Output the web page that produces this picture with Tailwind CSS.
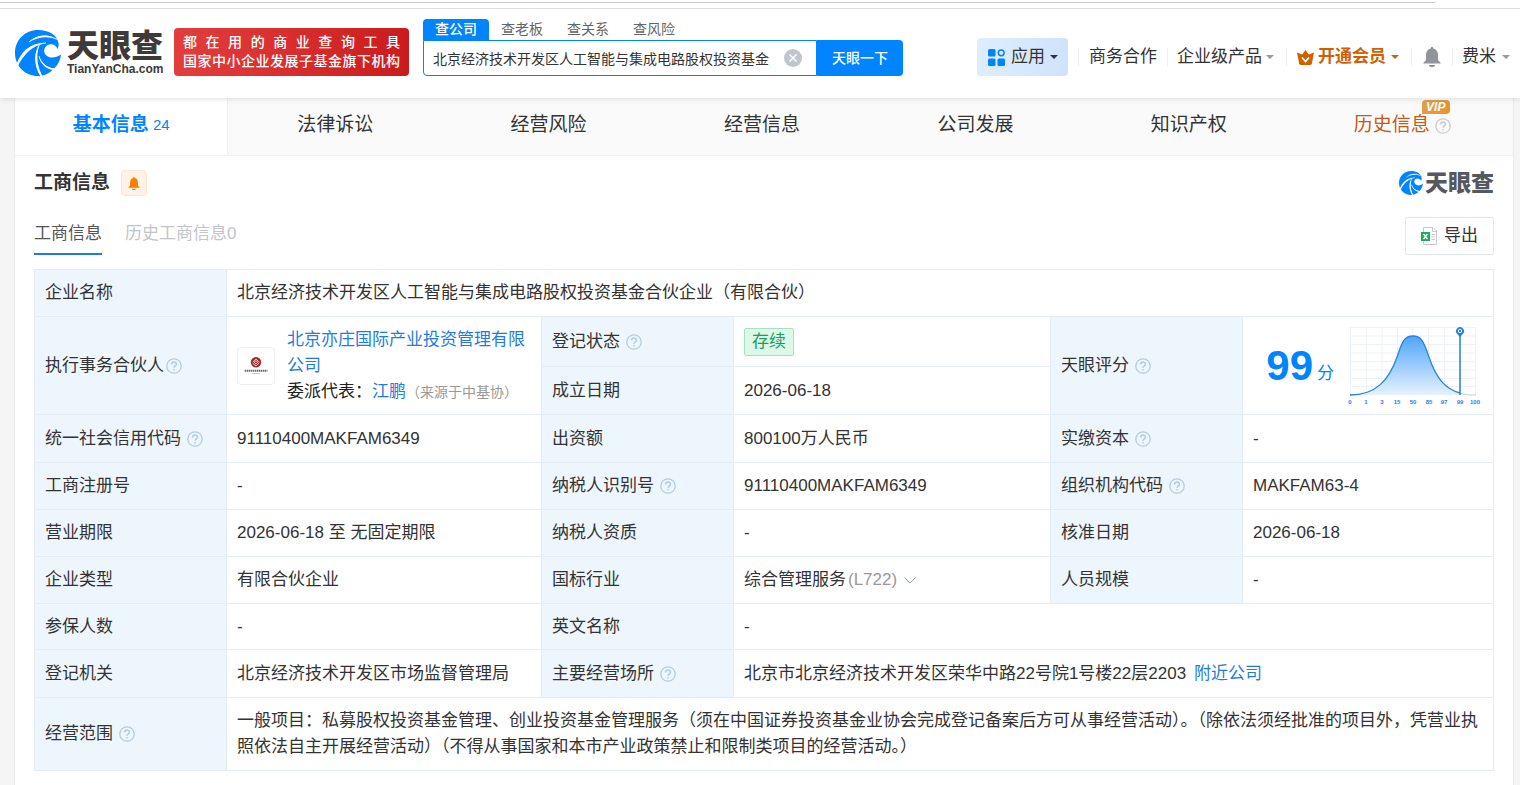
<!DOCTYPE html>
<html lang="zh-CN">

<head>
    <meta charset="UTF-8">
    <meta name="viewport" content="width=device-width, initial-scale=1.0">
    <title>天眼查 - 工商信息</title>
    <script src="https://cdn.jsdelivr.net/npm/@tailwindcss/browser@4"></script>
    <style>
        body {
            font-family: "Liberation Sans", "Noto Sans CJK SC", sans-serif;
        }

        .info th {
            background: #eef6fd;
            font-weight: 400;
            text-align: left;
        }

        .info th,
        .info td {
            border: 1px solid #e3edf4;
            padding: 0 10px;
        }
    </style>
</head>

<body class="bg-[#f5f5f5] text-[#333] text-[17px] leading-[26px] min-h-screen flex flex-col">
    <!-- 图标 -->
    <svg class="hidden">
        <symbol id="logo" viewBox="0 0 46 46">
            <path fill="#0084ff"
                d="M23 0C34 0 42 5 43.500 13C43.900 15 43.500 17 42.500 19C41 14.500 36 13 32 15.500C28 18.500 28.500 23.500 32 26C36 28.500 41 28 46 24.500C45 32 42 36 38 39.500C34 43.500 29 46 23 46C10 46 0 36 0 23C0 10 10 0 23 0Z" />
            <path fill="#fff"
                d="M14 12C22 4.500 33 3.500 42 9.500C33 6 24 6.500 14 12ZM1.500 35C5 23 14 12.500 31 13C18 15.500 9 23 2.500 37ZM24.500 14.500C18.500 23 18.500 35 25.500 46.500H27.500C21.500 35 21 24 24.500 14.500ZM24 26C25 33 31 39.500 38.500 40L39.500 38.500C32 37.500 26.500 33 24 26Z" />
            <path fill="none" stroke="#fff" stroke-width=".800"
                d="M14 12C22 5 33 4 42 9.500M2 36C7 23 15 14 31 13M24.500 14.500C19.500 24 20 35 26.500 46M24 26C26 34 32 39 39 39" />
        </symbol>
        <symbol id="help" viewBox="0 0 16 16">
            <circle cx="8" cy="8" r="7.200" fill="none" stroke="currentColor" stroke-width="1.300" />
            <path d="M5.600 6.400C5.600 3.200 10.500 3.300 10.500 6.200C10.500 7.900 8 8 8 9.800M8 11V12.500" fill="none"
                stroke="currentColor" stroke-width="1.500" />
        </symbol>
        <symbol id="bell" viewBox="0 0 18 20">
            <path
                d="M9 0C9.900 0 10.400 .6 10.400 1.500C13.400 2.200 15 4.700 15 8V13.500L17.500 15.500V16.500H.5V15.500L3 13.500V8C3 4.700 4.600 2.200 7.600 1.500C7.600 .6 8.100 0 9 0ZM6 18H12V19L10.500 20H7.500L6 19Z"
                fill="currentColor" />
        </symbol>
        <symbol id="caret" viewBox="0 0 8 4">
            <path d="M0 0H8L4 4Z" fill="currentColor" />
        </symbol>
    </svg>

    <header class="bg-white shadow-[0_1px_6px_rgba(0,0,0,0.12)] relative z-10">
        <div class="h-[9px] border-b border-[#dedede]">
            <div class="h-[3px] mr-[84px] border-b border-[#c8c8c8] rounded-br-lg"></div>
        </div>
        <div class="h-[89px] pb-[22px] pl-[15px] pr-[10px] flex items-end">
            <a href="#" class="flex items-center gap-[6px] shrink-0 text-[#3e3a39]">
                <svg class="size-[46px]">
                    <use href="#logo" />
                </svg>
                <span class="block w-[97px]">
                    <span class="block text-[32px] leading-[32px] font-black">天眼查</span>
                    <span class="block text-[12px] leading-[14px] font-bold">TianYanCha.com</span>
                </span>
            </a>
            <div
                class="ml-[10px] w-[235px] h-12 shrink-0 px-[9px] pt-[5px] rounded-sm bg-linear-to-r from-[#e43d3d] to-[#cb1a1c] text-white text-[14px] leading-[19px] font-medium whitespace-nowrap">
                <p class="[text-align-last:justify]">都 在 用 的 商 业 查 询 工 具</p>
                <p class="[text-align-last:justify]">国家中小企业发展子基金旗下机构</p>
            </div>

            <form class="ml-[14px] w-[480px] shrink-0">
                <div class="flex text-[14px] leading-[21px] text-[#666]">
                    <button type="button" class="w-[66px] bg-[#0084ff] text-white font-medium rounded-t-sm">查公司</button>
                    <button type="button" class="w-[66px]">查老板</button>
                    <button type="button" class="w-[66px]">查关系</button>
                    <button type="button" class="w-[66px]">查风险</button>
                </div>
                <div class="flex h-9">
                    <div class="flex flex-1 items-center border border-[#0084ff] rounded-bl-sm pl-[9px] pr-[14px]">
                        <input type="text" aria-label="查公司" value="北京经济技术开发区人工智能与集成电路股权投资基金合伙企业（有限合伙）"
                            class="flex-1 min-w-0 h-full text-[14px] outline-none">
                        <button type="button" aria-label="清空" class="ml-[14px]">
                            <svg class="size-[18px]" viewBox="0 0 18 18">
                                <circle cx="9" cy="9" r="9" fill="#c0c4cc" />
                                <path d="M5.500 5.500L12.500 12.500M12.500 5.500L5.500 12.500" stroke="#fff" stroke-width="1.500" />
                            </svg>
                        </button>
                    </div>
                    <button type="submit"
                        class="w-[86px] bg-[#0084ff] text-white text-[14px] font-medium rounded-r-sm">天眼一下</button>
                </div>
            </form>

            <nav class="ml-auto flex items-center h-[38px] whitespace-nowrap">
                <button
                    class="flex items-center w-[91px] h-[38px] pl-[11px] rounded-sm bg-linear-to-r from-[#deeeff] to-[#cfe3fb]">
                    <svg class="size-[17px] mr-[6px]" viewBox="0 0 17 17" fill="#0084ff">
                        <rect width="7.500" height="7.500" rx="1.500" />
                        <rect y="9.500" width="7.500" height="7.500" rx="1.500" />
                        <rect x="9.500" y="9.500" width="7.500" height="7.500" rx="1.500" />
                        <circle cx="13.200" cy="3.800" r="2.900" fill="none" stroke="#0084ff" stroke-width="1.500" />
                    </svg>
                    应用
                    <svg class="w-2 h-1 ml-[5px]">
                        <use href="#caret" />
                    </svg>
                </button>
                <a href="#" class="ml-[10px] px-[10px] border-l border-[#eee] leading-[18px]">商务合作</a>
                <a href="#" class="flex items-center pl-[9px] pr-3 border-l border-[#eee] leading-[18px]">企业级产品
                    <svg class="w-2 h-1 ml-1 text-[#999]">
                        <use href="#caret" />
                    </svg>
                </a>
                <a href="#"
                    class="flex items-center pl-[10px] pr-3 border-l border-[#eee] leading-[18px] font-bold text-[#d06000]">
                    <svg class="w-[17px] h-[15px] mr-1" viewBox="0 0 17 15">
                        <path
                            d="M8.500 0L11.800 4.500L17 2.500L15 13C14.800 14.300 14.300 15 13 15H4C2.700 15 2.200 14.300 2 13L0 2.500L5.200 4.500Z"
                            fill="currentColor" />
                        <path d="M5 7.500L8.500 11.500L12 7.500" fill="none" stroke="#fff" stroke-width="1.800" />
                    </svg>
                    开通会员
                    <svg class="w-2 h-1 ml-[5px]">
                        <use href="#caret" />
                    </svg>
                </a>
                <a href="#" aria-label="消息" class="px-[11px] border-l border-[#eee] h-[18px] flex items-center">
                    <svg class="w-[18px] h-5 text-[#909499]">
                        <use href="#bell" />
                    </svg>
                </a>
                <a href="#" class="flex items-center pl-[9px] border-l border-[#eee] leading-[18px]">费米
                    <svg class="w-2 h-1 ml-[6px] text-[#999]">
                        <use href="#caret" />
                    </svg>
                </a>
            </nav>
        </div>
    </header>

    <main class="ml-[14px] mr-[6px] flex-1 bg-white border-x border-[#ebebeb]">
        <nav class="grid grid-cols-7 h-[58px] pr-1 bg-[#fafafa] border-b border-[#f0f0f0] text-[19px]">
            <a href="#"
                class="flex items-center justify-center pb-1 bg-white border-r border-[#f0f0f0] text-[#0084ff] font-bold">基本信息<span
                    class="ml-1 text-[15px] font-normal">24</span></a>
            <a href="#" class="flex items-center justify-center pb-1">法律诉讼</a>
            <a href="#" class="flex items-center justify-center pb-1">经营风险</a>
            <a href="#" class="flex items-center justify-center pb-1">经营信息</a>
            <a href="#" class="flex items-center justify-center pb-1">公司发展</a>
            <a href="#" class="flex items-center justify-center pb-1">知识产权</a>
            <a href="#" class="flex items-center justify-center pb-1 text-[#c55a11]">
                <span class="relative">历史信息
                    <span
                        class="absolute -top-3 -right-5 w-7 h-[14px] rounded-sm rounded-bl-none bg-linear-to-r from-[#e0a04a] to-[#e5952f] text-white text-[12px] leading-[14px] font-black italic text-center">VIP</span>
                </span>
                <svg class="size-4 ml-[5px] mt-[2px] text-[#ccc]">
                    <use href="#help" />
                </svg>
            </a>
        </nav>

        <section class="px-[19px] pt-[14px] pb-[14px]">
            <div class="flex items-center h-[26px]">
                <h2 class="text-[19px] font-bold">工商信息</h2>
                <button aria-label="订阅"
                    class="ml-[11px] size-[26px] flex items-center justify-center rounded-sm border border-[#ffe3cc] bg-[#fff3e8] text-[#ff7d00]">
                    <svg class="w-3 h-[13px]">
                        <use href="#bell" />
                    </svg>
                </button>
                <div class="ml-auto flex items-center gap-[2px] text-[#55585e]">
                    <svg class="size-6">
                        <use href="#logo" />
                    </svg>
                    <span class="text-[23px] leading-[26px] font-black">天眼查</span>
                </div>
            </div>

            <div class="mt-[21px] flex items-start">
                <a href="#" class="h-[38px] pt-1 border-b-2 border-[#1f7ed0] text-[#555]">工商信息</a>
                <a href="#" class="ml-[23px] pt-1 text-[#c4c4c8]">历史工商信息0</a>
                <button
                    class="ml-auto w-[89px] h-[38px] flex items-center justify-center gap-[6px] border border-[#e0e6ea] rounded-xs">
                    <svg class="w-[17px] h-[18px]" viewBox="0 0 17 18">
                        <path d="M2.500 .5H12L15.500 4V17.500H2.500ZM11.500 .5V4.500H15.500" fill="#fff" stroke="#c5c8ce" />
                        <path d="M10.500 7.500H14M10.500 10H14M10.500 12.500H14" stroke="#c5c8ce" />
                        <rect y="5" width="9" height="9" fill="#21a566" />
                        <path d="M2.500 7L6.500 12M6.500 7L2.500 12" stroke="#fff" stroke-width="1.300" />
                    </svg>
                    导出
                </button>
            </div>

            <table class="info mt-[14px] w-full table-fixed border-collapse">
                <colgroup>
                    <col class="w-[192px]">
                    <col class="w-[315px]">
                    <col class="w-[192px]">
                    <col class="w-[317px]">
                    <col class="w-[192px]">
                    <col>
                </colgroup>
                <tr class="h-[47px]">
                    <th>企业名称</th>
                    <td colspan="5">北京经济技术开发区人工智能与集成电路股权投资基金合伙企业（有限合伙）</td>
                </tr>
                <tr class="h-[50px]">
                    <th rowspan="2">
                        <div class="flex items-center">执行事务合伙人<svg class="size-4 ml-[2px] text-[#b3cbe2]">
                                <use href="#help" />
                            </svg></div>
                    </th>
                    <td rowspan="2">
                        <div class="flex items-center">
                            <svg class="size-[38px] shrink-0 mr-3 border border-[#eee] rounded-sm" viewBox="0 0 38 38">
                                <circle cx="19" cy="15" r="5.500" fill="#a3272d" />
                                <path d="M15.500 15L19 11.500L22.500 15M15.500 16L19 19L22.500 15.500M17 15L19 13.500L21 15L19 17Z"
                                    fill="none" stroke="#fff" stroke-width=".8" />
                                <path d="M7 24H31" stroke="#666" stroke-width="2" stroke-dasharray="1.500 .6" />
                                <path d="M15 27H23" stroke="#aaa" stroke-dasharray="1.500 .6" />
                            </svg>
                            <div>
                                <a href="#" class="text-[#1f7ce0]">北京亦庄国际产业投资管理有限公司</a>
                                <p class="text-[#222] whitespace-nowrap">委派代表：<a href="#"
                                        class="text-[#1f7ce0]">江鹏</a><span
                                        class="text-[14px] text-[#999]">（来源于中基协）</span></p>
                            </div>
                        </div>
                    </td>
                    <th>
                        <div class="flex items-center">登记状态<svg class="size-4 ml-[6px] text-[#b3cbe2]">
                                <use href="#help" />
                            </svg></div>
                    </th>
                    <td><span
                            class="inline-block px-[7px] border border-[#a5e3c0] bg-[#ddf8e8] text-[#16a05c] rounded-xs">存续</span>
                    </td>
                    <th rowspan="2">
                        <div class="flex items-center">天眼评分<svg class="size-4 ml-[6px] text-[#b3cbe2]">
                                <use href="#help" />
                            </svg></div>
                    </th>
                    <td rowspan="2">
                        <div class="flex items-center justify-end">
                            <span class="text-[42px] leading-[42px] font-bold text-[#0084ff]">99</span>
                            <span class="ml-1 mt-4 text-[#0084ff]">分</span>
                            <!-- 评分分布曲线 -->
                            <svg class="ml-3 w-[137px] h-20" viewBox="0 0 137 80">
                                <defs>
                                    <linearGradient id="score" x1="0" y1="0" x2="0" y2="1">
                                        <stop offset="0" stop-color="#4ea5fb" />
                                        <stop offset="1" stop-color="#e6f2fe" />
                                    </linearGradient>
                                </defs>
                                <path fill="none" stroke="#edf2f8"
                                    d="M4.500 1.500H130M4.500 10H130M4.500 18.500H130M4.500 27H130M4.500 35.500H130M4.500 44H130M4.500 52.500H130M4.500 60.500H130M4.500 1V69M20.500 1V69M36 1V69M51.500 1V69M67 1V69M82.500 1V69M98.500 1V69M114 1V69M129.500 1V69" />
                                <path fill="url(#score)"
                                    d="M4 69C30 69 43 54 51 31C56 16 58 10 67 10C76 10 78 17 83 31C90 52 99 63 114 67V69Z" />
                                <path fill="none" stroke="#2a82dc" stroke-width="1.300"
                                    d="M4 69C30 69 43 54 51 31C56 16 58 10 67 10C76 10 78 17 83 31C90 52 99 63 114 67" />
                                <path fill="none" stroke="#c3cdd8" d="M114 67C119 69 124 69 130 69" />
                                <path stroke="#1f7fe0" stroke-width="1.500" d="M114 8V69" />
                                <path fill="#1f7fe0" d="M114 11L110.800 7.500A4 4 0 1 1 117.200 7.500Z" />
                                <circle cx="114" cy="5" r="1.700" fill="#1f7fe0" stroke="#fff" />
                                <g fill="#2a82dc" font-size="6" font-weight="700" text-anchor="middle">
                                    <text x="4" y="78">0</text>
                                    <text x="20" y="78">1</text>
                                    <text x="36" y="78">3</text>
                                    <text x="51" y="78">15</text>
                                    <text x="67" y="78">50</text>
                                    <text x="83" y="78">85</text>
                                    <text x="98" y="78">97</text>
                                    <text x="114" y="78">99</text>
                                    <text x="129" y="78">100</text>
                                </g>
                            </svg>
                        </div>
                    </td>
                </tr>
                <tr class="h-[48px]">
                    <th>成立日期</th>
                    <td>2026-06-18</td>
                </tr>
                <tr class="h-[48px]">
                    <th>
                        <div class="flex items-center">统一社会信用代码<svg class="size-4 ml-[6px] text-[#b3cbe2]">
                                <use href="#help" />
                            </svg></div>
                    </th>
                    <td>91110400MAKFAM6349</td>
                    <th>出资额</th>
                    <td>800100万人民币</td>
                    <th>
                        <div class="flex items-center">实缴资本<svg class="size-4 ml-[6px] text-[#b3cbe2]">
                                <use href="#help" />
                            </svg></div>
                    </th>
                    <td>-</td>
                </tr>
                <tr class="h-[47px]">
                    <th>工商注册号</th>
                    <td>-</td>
                    <th>
                        <div class="flex items-center">纳税人识别号<svg class="size-4 ml-[6px] text-[#b3cbe2]">
                                <use href="#help" />
                            </svg></div>
                    </th>
                    <td>91110400MAKFAM6349</td>
                    <th>
                        <div class="flex items-center">组织机构代码<svg class="size-4 ml-[6px] text-[#b3cbe2]">
                                <use href="#help" />
                            </svg></div>
                    </th>
                    <td>MAKFAM63-4</td>
                </tr>
                <tr class="h-[47px]">
                    <th>营业期限</th>
                    <td>2026-06-18 至 无固定期限</td>
                    <th>纳税人资质</th>
                    <td>-</td>
                    <th>核准日期</th>
                    <td>2026-06-18</td>
                </tr>
                <tr class="h-[47px]">
                    <th>企业类型</th>
                    <td>有限合伙企业</td>
                    <th>国标行业</th>
                    <td>
                        <div class="flex items-center">综合管理服务<span class="ml-[2px] text-[#999]">(L722)</span>
                            <svg class="w-3 h-[7px] ml-[7px]" viewBox="0 0 12 7">
                                <path d="M.5 .5L6 6L11.500 .5" fill="none" stroke="#999" />
                            </svg>
                        </div>
                    </td>
                    <th>人员规模</th>
                    <td>-</td>
                </tr>
                <tr class="h-[46px]">
                    <th>参保人数</th>
                    <td>-</td>
                    <th>英文名称</th>
                    <td colspan="3">-</td>
                </tr>
                <tr class="h-[48px]">
                    <th>登记机关</th>
                    <td>北京经济技术开发区市场监督管理局</td>
                    <th>
                        <div class="flex items-center">主要经营场所<svg class="size-4 ml-[6px] text-[#b3cbe2]">
                                <use href="#help" />
                            </svg></div>
                    </th>
                    <td colspan="3">北京市北京经济技术开发区荣华中路22号院1号楼22层2203<a href="#"
                            class="ml-2 text-[#1f7ce0]">附近公司</a></td>
                </tr>
                <tr class="h-[73px]">
                    <th>
                        <div class="flex items-center">经营范围<svg class="size-4 ml-[6px] text-[#b3cbe2]">
                                <use href="#help" />
                            </svg></div>
                    </th>
                    <td colspan="5">
                        一般项目：私募股权投资基金管理、创业投资基金管理服务（须在中国证券投资基金业协会完成登记备案后方可从事经营活动）。（除依法须经批准的项目外，凭营业执照依法自主开展经营活动）（不得从事国家和本市产业政策禁止和限制类项目的经营活动。）
                    </td>
                </tr>
            </table>
        </section>
    </main>
</body>

</html>
